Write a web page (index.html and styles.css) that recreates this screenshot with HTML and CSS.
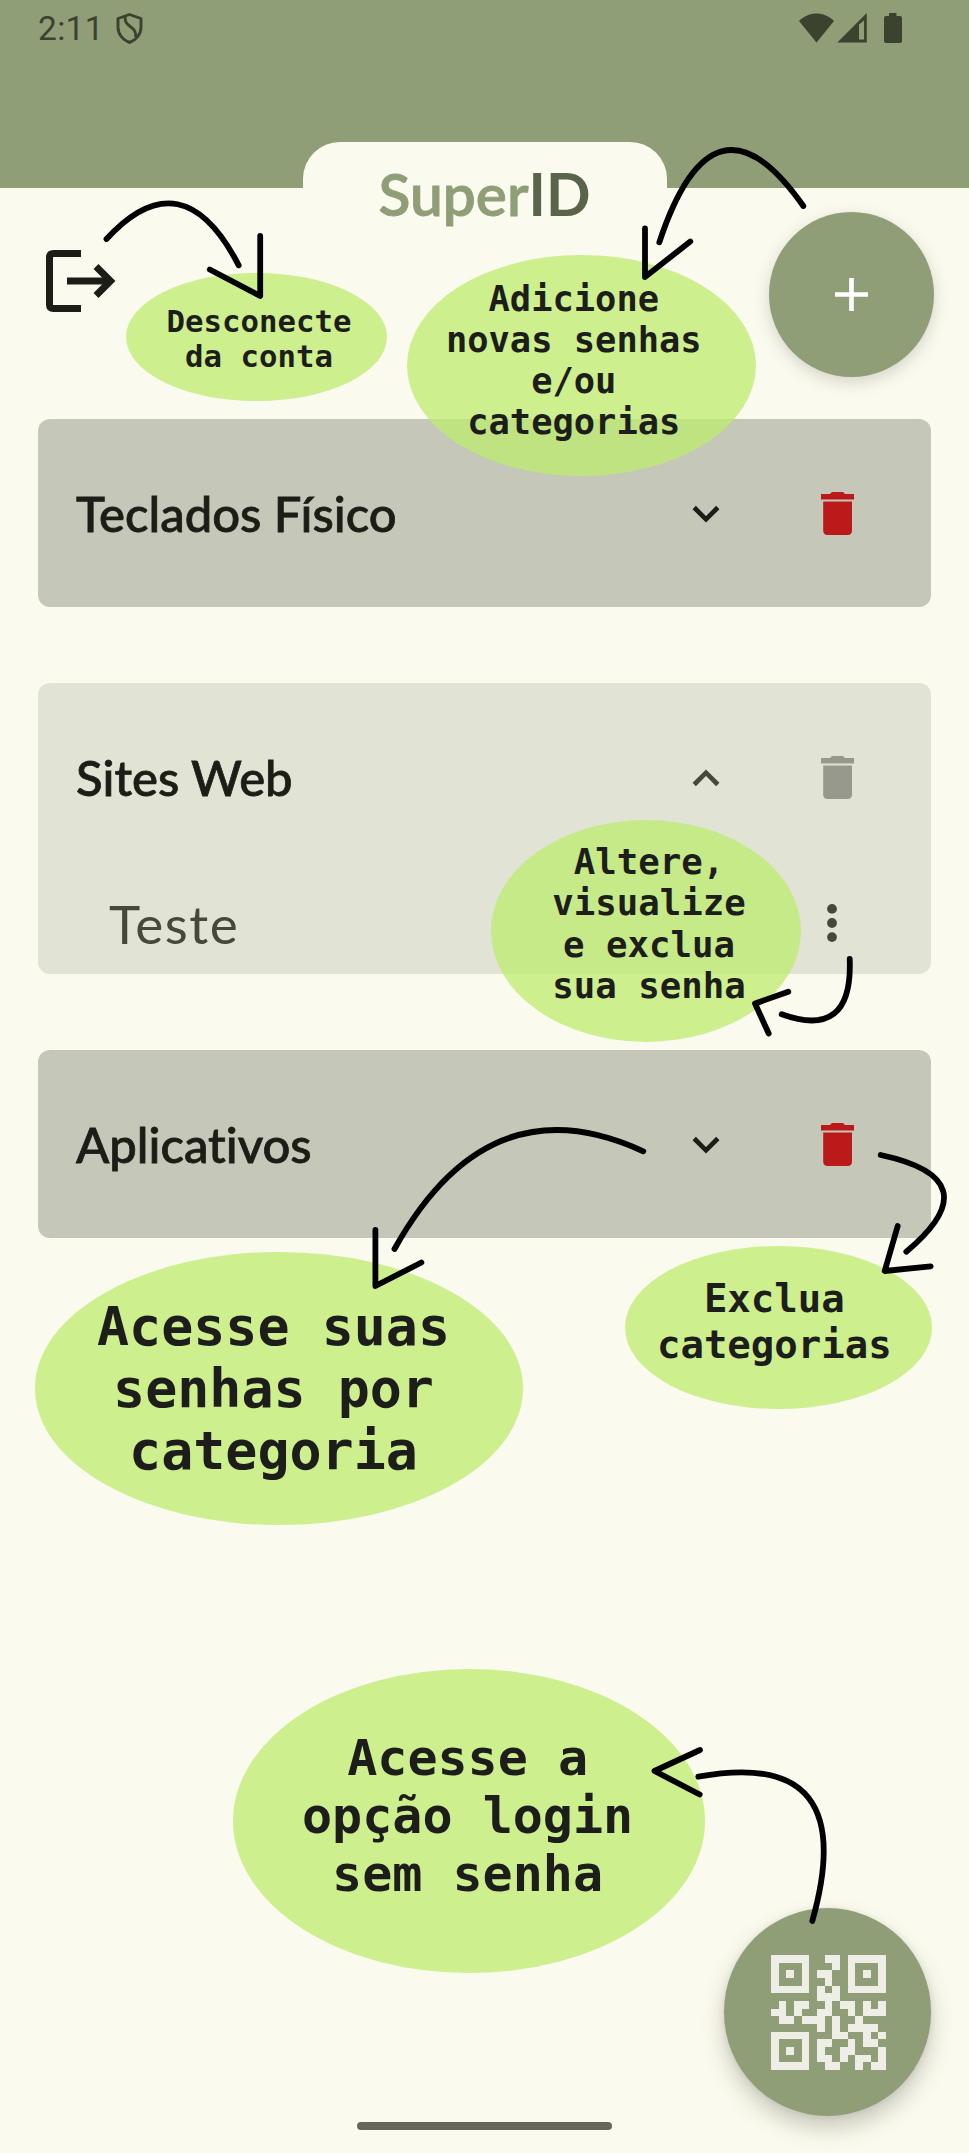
FILE: index.html
```html
<!DOCTYPE html>
<html lang="pt-BR">
<head>
<meta charset="utf-8">
<title>SuperID</title>
<link rel="stylesheet" href="styles.css">
</head>
<body>
<svg class="defs" width="0" height="0" aria-hidden="true">
  <symbol id="trash" viewBox="0 0 33 43"><path d="M9 2 11 0H22L24 2H33V7.600H0V2ZM2.200 9.600H31V38.600Q31 43 26.600 43H6.600Q2.200 43 2.200 38.600Z"/></symbol>
  <symbol id="chevron" viewBox="0 0 28 18"><path d="M2.200 2.500 14 14.300 25.800 2.500" fill="none" stroke="currentColor" stroke-width="4.700"/></symbol>
</svg>
<div class="screen">
  <header class="header">
    <div class="status">
      <span class="clock">2:11</span>
      <svg class="shield" viewBox="0 0 27 31"><path d="M13.500 1.500 25 5.500V14.500C25 21.500 19.500 27.500 13.500 29.500 7.500 27.500 2 21.500 2 14.500V5.500ZM9.200 3.500C7.500 14.500 21.500 13 19.500 24" fill="none" stroke="currentColor" stroke-width="2.900" stroke-linejoin="round"/></svg>
      <svg class="signals" viewBox="0 0 103 31"><path d="M0 8C10-2 25-2 35 8L17.500 29.500Z"/><path fill-rule="evenodd" d="M38.300 29.500 67.800 0V29.500ZM60 11.500V26.500H65V7.500Z"/><path d="M90 0H97.500V3H101Q103 3 103 5V28Q103 30 101 30H87Q85 30 85 28V5Q85 3 87 3H90Z"/></svg>
    </div>
    <h1 class="brand">Super<b>ID</b></h1>
  </header>
  <div class="toolbar">
    <svg class="logout" viewBox="0 0 70 62"><g fill="none" stroke="currentColor" stroke-width="7"><path d="M35 3.500H7.500Q3.500 3.500 3.500 7.500V54.500Q3.500 58.500 7.500 58.500H35M21 31H63"/><path d="M50 16.500 64.500 31 50 45.500"/></g></svg>
    <div class="fab add"><svg viewBox="0 0 34 34"><path d="M17 0V34M0 17H34" stroke="currentColor" stroke-width="4.800"/></svg></div>
  </div>
  <main class="list">
    <section class="card">
      <div class="row"><h2>Teclados Físico</h2><svg class="chev"><use href="#chevron"/></svg><svg class="bin"><use href="#trash"/></svg></div>
    </section>
    <section class="card open">
      <div class="row"><h2>Sites Web</h2><svg class="chev up"><use href="#chevron"/></svg><svg class="bin"><use href="#trash"/></svg></div>
      <div class="entry"><span>Teste</span><svg class="dots" viewBox="0 0 10 38"><circle cx="5" cy="4.900" r="4.900"/><circle cx="5" cy="19" r="4.900"/><circle cx="5" cy="33.100" r="4.900"/></svg></div>
    </section>
    <section class="card">
      <div class="row"><h2>Aplicativos</h2><svg class="chev"><use href="#chevron"/></svg><svg class="bin"><use href="#trash"/></svg></div>
    </section>
  </main>
  <footer class="footer">
    <div class="fab qr"><svg viewBox="0 0 15 15" shape-rendering="crispEdges"><path fill-rule="evenodd" d="M0 0h5v5h-5zM1 1v3h3v-3zM2 2h1v1h-1zM10 0h5v5h-5zM11 1v3h3v-3zM12 2h1v1h-1zM0 10h5v5h-5zM1 11v3h3v-3zM2 12h1v1h-1z"/><path d="M7 0h2v1h-2zM8 1h1v1h-1zM6 2h2v1h-2zM7 3h1v1h-1zM6 4h1v1h-1zM8 4h1v1h-1zM6 5h3v1h-3zM1 6h1v1h-1zM3 6h2v1h-2zM7 6h1v1h-1zM9 6h2v1h-2zM12 6h1v1h-1zM14 6h1v1h-1zM0 7h2v1h-2zM3 7h1v1h-1zM6 7h2v1h-2zM10 7h1v1h-1zM12 7h3v1h-3zM1 8h2v1h-2zM4 8h3v1h-3zM8 8h1v1h-1zM11 8h1v1h-1zM6 9h1v1h-1zM8 9h1v1h-1zM10 9h4v1h-4zM8 10h2v1h-2zM12 10h1v1h-1zM14 10h1v1h-1zM6 11h2v1h-2zM10 11h1v1h-1zM12 11h2v1h-2zM6 12h1v1h-1zM9 12h2v1h-2zM14 12h1v1h-1zM6 13h2v1h-2zM9 13h1v1h-1zM11 13h2v1h-2zM14 13h1v1h-1zM7 14h2v1h-2zM11 14h1v1h-1zM13 14h2v1h-2z"/></svg></div>
    <div class="home"></div>
  </footer>

  <p class="note n1">Desconecte<br>da conta</p>
  <p class="note n2">Adicione<br>novas senhas<br>e/ou<br>categorias</p>
  <p class="note n3">Altere,<br>visualize<br>e exclua<br>sua senha</p>
  <p class="note n4">Acesse suas<br>senhas por<br>categoria</p>
  <p class="note n5">Exclua<br>categorias</p>
  <p class="note n6">Acesse a<br>opção login<br>sem senha</p>

  <svg class="arrows" viewBox="0 0 969 2153">
    <path d="M106.500 239Q182.500 156.300 238.700 265.300M209.700 269.500 260.200 296V236"/>
    <path d="M803.300 206Q713.800 78.100 659.300 242.300M645 228.500V277L690.300 241.500"/>
    <path d="M849.700 959Q853 1040 781.700 1014.300M788.300 991.700 755 1003.500 768.700 1033.500"/>
    <path d="M643.300 1151.300Q488.700 1079.600 394.500 1249M375.400 1230V1286L421.400 1262.500"/>
    <path d="M880.700 1155Q992.900 1179 906.300 1251.700M897.700 1226 884.700 1271 930.700 1266.300"/>
    <path d="M812.300 1921Q861.600 1746.700 698.300 1776.700M700 1750 654.500 1771 699.700 1794.500"/>
  </svg>
</div>
</body>
</html>
```
FILE: styles.css
```css
* { box-sizing: border-box; }
body { margin: 0; background: #fafaee; font-family: Lato, sans-serif; color: #1c1d16; }
h1, h2, p { margin: 0; }
svg { display: block; flex: none; fill: currentColor; }
.defs { position: absolute; }

.screen { position: relative; width: 969px; height: 2153px; display: flex; flex-direction: column; overflow: hidden; }

.header { height: 188.300px; flex: none; background: #909e78; display: flex; flex-direction: column; align-items: center; }
.status { width: 100%; height: 141.700px; flex: none; display: flex; align-items: flex-start; padding: 13px 67px 0 38px; color: #3b422e; }
.clock { font: 400 33.500px/31px Roboto, sans-serif; width: 78px; letter-spacing: .3px; }
.shield { width: 27px; height: 31px; }
.signals { width: 103px; height: 31px; margin-left: auto; }
.brand { width: 364px; height: 90px; flex: none; border-radius: 37px 37px 0 0; background: #fafaee; text-align: center; font-size: 58.600px; line-height: 103px; font-weight: 600; color: #909e78; -webkit-text-stroke: .8px currentColor; }
.brand b { font-weight: 700; color: #5a644b; -webkit-text-stroke: 0; }

.toolbar { height: 230.700px; flex: none; display: flex; justify-content: space-between; align-items: flex-start; padding: 23.500px 35px 0 46px; }
.logout { width: 70px; height: 62px; margin-top: 38.500px; }
.fab { border-radius: 50%; background: #909e78; display: flex; align-items: center; justify-content: center; }
.add { width: 165px; height: 165px; color: #fff; box-shadow: 0 5px 16px rgba(60, 60, 50, .2); }
.add svg { width: 33px; height: 33px; }

.list { display: flex; flex-direction: column; gap: 75.300px; padding: 0 38px; }
.card { border-radius: 12px; background: #c5c7b8; height: 188.500px; }
.card.open { background: #e1e3d5; height: 291.700px; }
.row { height: 188.500px; display: flex; align-items: center; padding: 0 77px 0 38px; }
.row h2 { flex: 1; font-size: 49px; line-height: 60px; font-weight: 500; padding-bottom: 1px; font-variant-ligatures: none; -webkit-text-stroke: .800px currentColor; }
.chev { width: 28px; height: 18px; margin: 1.500px 101px 0 0; }
.bin { width: 33px; height: 43px; color: #bb1a1b; }
.open .bin { color: #97998c; }
.up { transform: rotate(180deg); color: #46483c; }
.entry { height: 103px; display: flex; align-items: flex-start; justify-content: space-between; padding: 20px 94px 0 71px; color: #46483c; font-size: 53px; line-height: 66px; letter-spacing: 1.500px; }
.dots { width: 10px; height: 38px; margin-top: 12.500px; }

.footer { margin-top: auto; display: flex; flex-direction: column; }
.qr { width: 207.500px; height: 207.500px; align-self: flex-end; margin-right: 38px; padding: 2px 0 0 2px; color: #efeee6; box-shadow: 0 12px 22px rgba(60, 60, 50, .26), 0 1px 6px rgba(60, 60, 50, .1); }
.qr svg { width: 115px; height: 115px; filter: drop-shadow(0 0 .5px rgba(50, 55, 40, .5)); }
.home { width: 255px; height: 8px; border-radius: 4px; background: #66675c; align-self: center; margin: 6px 0 23.500px; z-index: 1; }

.note { position: absolute; border-radius: 50%; background: rgba(191, 235, 113, .765); color: #1d1e1b; font-family: "DejaVu Sans Mono", monospace; font-weight: 700; text-align: center; white-space: nowrap; }
.n1 { left: 126px; top: 272.700px; width: 261px; height: 128.500px; padding: 31.400px 0 0 5px; font-size: 30.700px; line-height: 35px; }
.n2 { left: 407.300px; top: 254.700px; width: 349px; height: 221.500px; padding: 23.600px 16px 0 0; font-size: 35.400px; line-height: 41px; }
.n3 { left: 491px; top: 820px; width: 310px; height: 221.700px; padding: 20.900px 0 0 6px; font-size: 35.700px; line-height: 41.400px; }
.n4 { left: 35px; top: 1252.300px; width: 488px; height: 272.400px; padding: 44px 11px 0 0; font-size: 53.300px; line-height: 62px; }
.n5 { left: 624.700px; top: 1245.700px; width: 307.300px; height: 163.300px; padding: 30.100px 8px 0 0; font-size: 39px; line-height: 46px; }
.n6 { left: 233.400px; top: 1669px; width: 471.400px; height: 303.700px; padding: 59.700px 3px 0 0; font-size: 50px; line-height: 58px; }

.arrows { position: absolute; left: 0; top: 0; width: 969px; height: 2153px; fill: none; stroke: #000; stroke-width: 5.800; stroke-linecap: round; stroke-linejoin: round; pointer-events: none; }
```
